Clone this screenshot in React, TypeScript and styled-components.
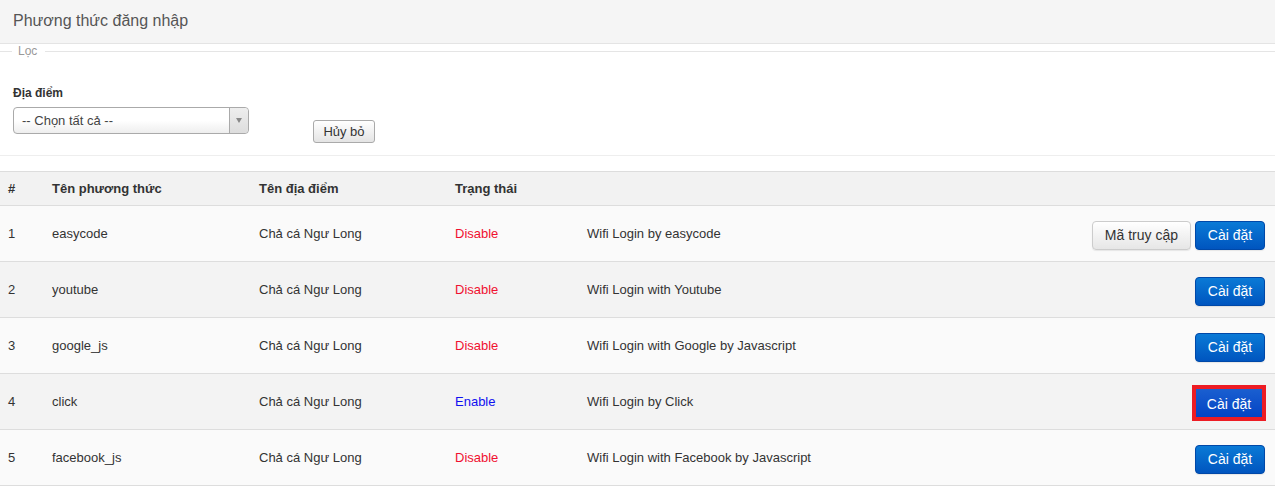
import styled, { createGlobalStyle, css } from "styled-components"

const GlobalStyle = createGlobalStyle`
  html, body {
    margin: 0;
    padding: 0;
    background: #fff;
    font-family: "Liberation Sans", Arial, sans-serif;
    color: #333;
  }
`

const Page = styled.div`
  width: 100%;
`

const TitleBar = styled.div`
  height: 44px;
  background: #f5f5f5;
  border-bottom: 1px solid #e4e4e4;
  display: flex;
  align-items: center;
  padding: 0 13px 2px;
  box-sizing: border-box;
  font-size: 16px;
  color: #555;
`

const LegendRow = styled.div`
  display: flex;
  align-items: center;
  height: 14px;
`

const LegendLine = styled.div<{ $grow?: boolean }>`
  height: 1px;
  background: #e5e5e5;
  width: 12px;
  ${(p) => p.$grow && css`flex: 1;`}
`

const LegendText = styled.span`
  font-size: 12px;
  color: #999;
  padding: 0 8px 0 6px;
  line-height: 14px;
`

const FilterBody = styled.div`
  display: flex;
  align-items: flex-start;
  gap: 64px;
  padding: 26px 13px 12px;
  border-bottom: 1px solid #eee;
`

const FieldGroup = styled.div`
  display: flex;
  flex-direction: column;
  gap: 6px;
  padding-top: 2px;
`

const Label = styled.label`
  font-size: 12px;
  font-weight: bold;
  line-height: 15px;
  color: #333;
`

const SelectBox = styled.div`
  width: 236px;
  height: 27px;
  box-sizing: border-box;
  border: 1px solid #aaa;
  border-radius: 4px;
  background: linear-gradient(#fff 50%, #eee);
  display: flex;
  align-items: center;
  font-size: 13px;
  color: #444;
`

const SelectText = styled.span`
  flex: 1;
  padding-left: 8px;
`

const SelectArrow = styled.span`
  width: 18px;
  height: 100%;
  border-left: 1px solid #aaa;
  display: flex;
  align-items: center;
  justify-content: center;
  background: linear-gradient(#eee, #ddd);
  border-radius: 0 4px 4px 0;

  &::after {
    content: "";
    border-left: 3px solid transparent;
    border-right: 3px solid transparent;
    border-top: 5px solid #888;
  }
`

const CancelButton = styled.button`
  margin-top: 36px;
  width: 62px;
  height: 23px;
  font-family: inherit;
  font-size: 13px;
  color: #333;
  border: 1px solid #aaa;
  border-radius: 3px;
  background: linear-gradient(#fff, #e4e4e4);
  padding: 0;
  white-space: nowrap;
`

const TableWrap = styled.div`
  margin-top: 15px;
`

const Table = styled.table`
  width: 100%;
  border-collapse: collapse;
  table-layout: fixed;
  font-size: 13px;
`

const Th = styled.th`
  text-align: left;
  font-weight: bold;
  background: #f2f2f2;
  border-top: 1px solid #ddd;
  border-bottom: 1px solid #ddd;
  height: 33px;
  padding: 0 8px;
  color: #333;
`

const Tr = styled.tr<{ $odd: boolean }>`
  background: ${(p) => (p.$odd ? "#fafafa" : "#f3f3f3")};
`

const Td = styled.td`
  height: 55px;
  padding: 0 8px;
  border-bottom: 1px solid #ddd;
  color: #333;
  vertical-align: middle;
`

const Status = styled.span<{ $on: boolean }>`
  color: ${(p) => (p.$on ? "#1010f0" : "#f01030")};
`

const Actions = styled.div`
  display: flex;
  justify-content: flex-end;
  align-items: center;
  gap: 4px;
  padding-top: 3px;
  margin-right: 2px;
`

const Btn = styled.button<{ $primary?: boolean; $marked?: boolean }>`
  height: 29px;
  box-sizing: border-box;
  font-family: inherit;
  font-size: 14px;
  white-space: nowrap;
  border-radius: 4px;
  padding: 0 12px;
  border: 1px solid #ccc;
  color: #333;
  background: linear-gradient(#fff, #e6e6e6);
  box-shadow: 0 1px 1px rgba(0, 0, 0, 0.08);
  ${(p) =>
    p.$primary &&
    css`
      width: 70px;
      padding: 0;
      color: #fff;
      border-color: #0048a8;
      background: linear-gradient(#0a7ad6, #0055bf);
    `}
  ${(p) =>
    p.$marked &&
    css`
      width: 74px;
      height: 36px;
      margin-right: -1px;
      border: 4px solid #ed1c24;
      border-radius: 0;
      background: linear-gradient(#1a5fd0, #0444c4);
      box-shadow: none;
      padding-top: 1px;
    `}
`

type Row = {
  id: number
  name: string
  place: string
  enabled: boolean
  desc: string
  access?: boolean
  marked?: boolean
}

const rows: Row[] = [
  { id: 1, name: "easycode", place: "Chả cá Ngư Long", enabled: false, desc: "Wifi Login by easycode", access: true },
  { id: 2, name: "youtube", place: "Chả cá Ngư Long", enabled: false, desc: "Wifi Login with Youtube" },
  { id: 3, name: "google_js", place: "Chả cá Ngư Long", enabled: false, desc: "Wifi Login with Google by Javascript" },
  { id: 4, name: "click", place: "Chả cá Ngư Long", enabled: true, desc: "Wifi Login by Click", marked: true },
  { id: 5, name: "facebook_js", place: "Chả cá Ngư Long", enabled: false, desc: "Wifi Login with Facebook by Javascript" },
]

export default function App() {
  return (
    <Page>
      <GlobalStyle />
      <TitleBar>Phương thức đăng nhập</TitleBar>
      <LegendRow>
        <LegendLine />
        <LegendText>Lọc</LegendText>
        <LegendLine $grow />
      </LegendRow>
      <FilterBody>
        <FieldGroup>
          <Label>Địa điểm</Label>
          <SelectBox>
            <SelectText>-- Chọn tất cả --</SelectText>
            <SelectArrow />
          </SelectBox>
        </FieldGroup>
        <CancelButton>Hủy bỏ</CancelButton>
      </FilterBody>
      <TableWrap>
        <Table>
          <colgroup>
            <col style={{ width: 44 }} />
            <col style={{ width: 207 }} />
            <col style={{ width: 196 }} />
            <col style={{ width: 132 }} />
            <col style={{ width: 400 }} />
            <col />
          </colgroup>
          <thead>
            <tr>
              <Th>#</Th>
              <Th>Tên phương thức</Th>
              <Th>Tên địa điểm</Th>
              <Th>Trạng thái</Th>
              <Th />
              <Th />
            </tr>
          </thead>
          <tbody>
            {rows.map((r) => (
              <Tr key={r.id} $odd={r.id % 2 === 1}>
                <Td>{r.id}</Td>
                <Td>{r.name}</Td>
                <Td>{r.place}</Td>
                <Td>
                  <Status $on={r.enabled}>{r.enabled ? "Enable" : "Disable"}</Status>
                </Td>
                <Td>{r.desc}</Td>
                <Td>
                  <Actions>
                    {r.access && <Btn>Mã truy cập</Btn>}
                    <Btn $primary $marked={r.marked}>
                      Cài đặt
                    </Btn>
                  </Actions>
                </Td>
              </Tr>
            ))}
          </tbody>
        </Table>
      </TableWrap>
    </Page>
  )
}
